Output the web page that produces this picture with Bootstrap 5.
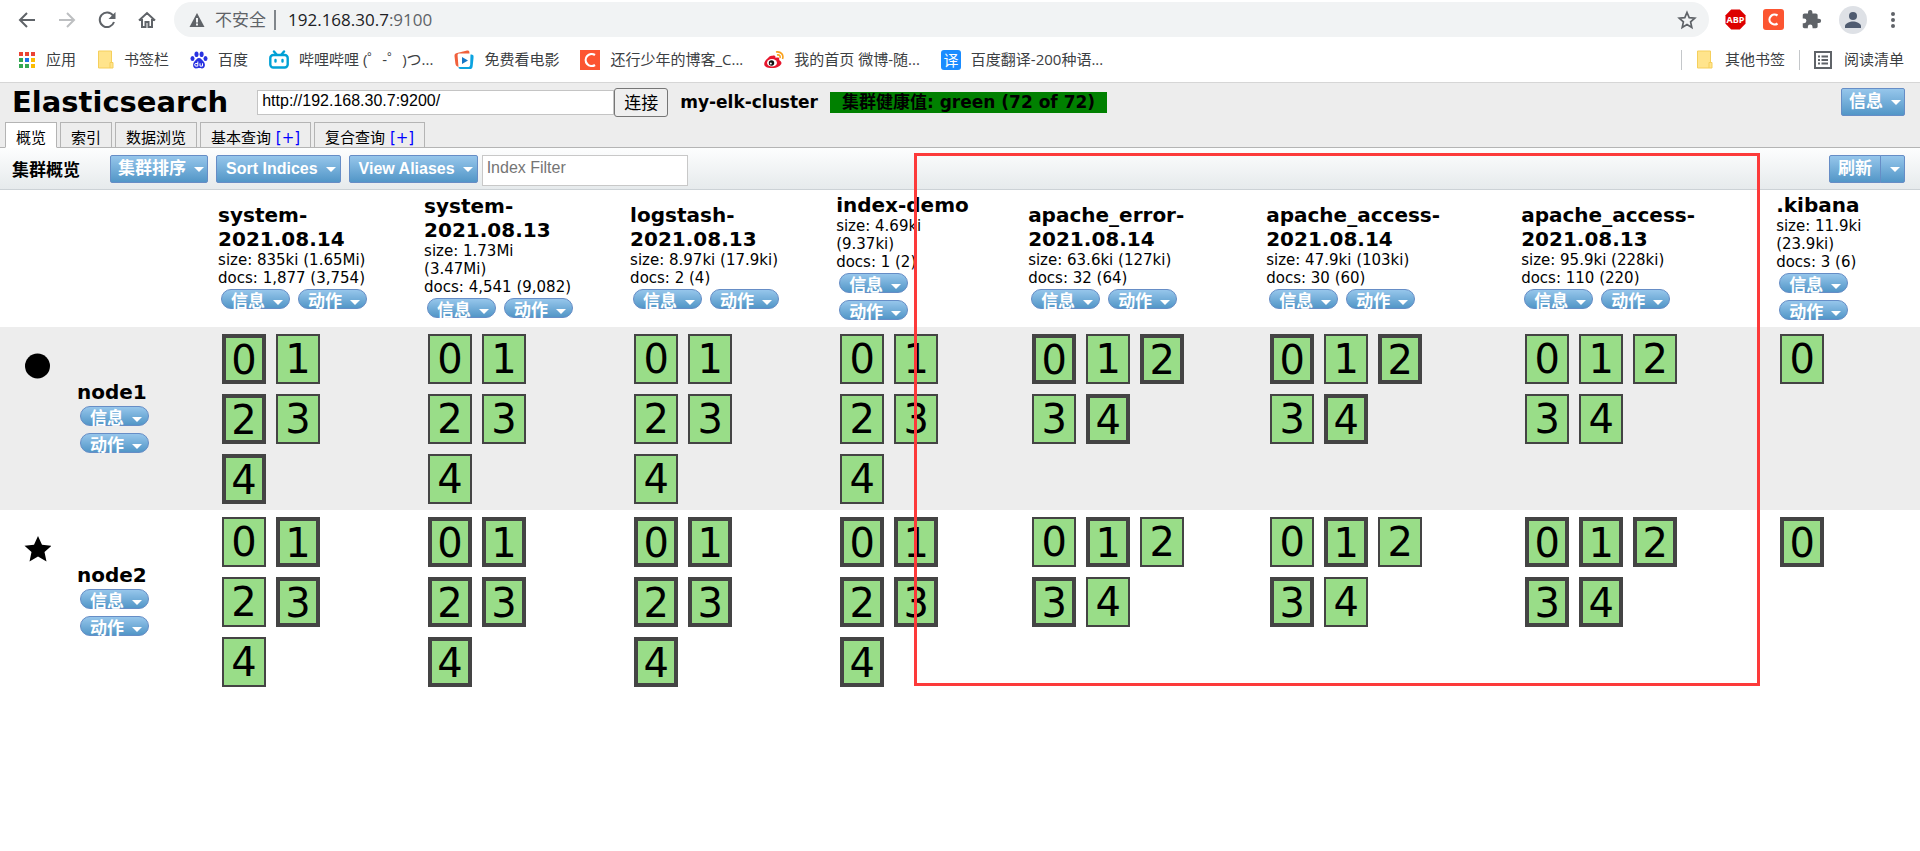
<!DOCTYPE html>
<html lang="zh-CN">
<head>
<meta charset="utf-8">
<meta name="viewport" content="width=device-width, initial-scale=1">
<title>elasticsearch-head</title>
<link href="https://cdn.jsdelivr.net/npm/bootstrap@5.3.0/dist/css/bootstrap.min.css" rel="stylesheet">
<style>
  body { font-family: "DejaVu Sans", "Noto Sans CJK SC", sans-serif; color: #000; background: #fff; }
  a { color: inherit; text-decoration: none; }
  svg { flex: none; display: block; }

  /* Browser bars */
  .chrome { font-family: "Open Sans", "Noto Sans CJK SC", sans-serif; color: #3c4043; border-bottom: 1px solid #d6d6d6; }
  .address-bar { padding: 2px 18px 0 18px; gap: 10px; }
  .tool { background: none; border: 0; padding: 0; }
  .nav-tools { gap: 22px; margin-right: 8px; }
  .omnibox { background: #f1f3f4; border-radius: 18px; height: 35px; padding: 0 12px 0 14px; font-size: 17px; color: #5f6368; }
  .omnibox .vline { width: 2px; height: 20px; background: #80868b; margin: 0 12px 0 8px; }
  .warn { margin-right: 9px; }
  .host { color: #202124; }
  .extensions { gap: 17px; margin-left: 6px; }
  .bookmarks { height: 45px; padding: 0 16px 0 18px; gap: 21px; font-size: 15px; }
  .bookmark { display: flex; align-items: center; gap: 10px; white-space: nowrap; }
  .side-marks { gap: 14px; }
  .side-marks .bookmark { gap: 12px; }
  .bookmark-line { width: 1px; height: 20px; background: #c4c7ca; }
  .bookmark-c { background: #fc5531; }

  /* Page header */
  .app-header { background: #ededed; border-bottom: 1px solid #b4b4b4; height: 65px; }
  .header-top { padding: 2px 15px 0 12px; }
  .app-name { font-size: 29px; line-height: 34px; font-weight: 700; margin: 0 29px 0 0; }
  .url-input { width: 357px; height: 25px; border: 1px solid #c4c4c4; padding: 0 4px 2px; font: 16px "Liberation Sans", sans-serif; }
  .connect { height: 29px; border: 1px solid #767676; border-radius: 3px; background: #efefef; padding: 0 9px; font: 17px/24px "Noto Sans CJK SC", sans-serif; color: #000; }
  .cluster { font-size: 17px; line-height: 21px; font-weight: 700; margin-left: 12px; }
  .health { background: #008000; padding: 0 12px; }
  .app-tabs { position: absolute; left: 5px; bottom: -1px; gap: 3px; font-size: 15px; line-height: 22px; }
  .app-tab { height: 26px; padding: 4px 10px 0; border: 1px solid #b4b4b4; white-space: nowrap; }
  .app-tab.active { background: #fff; border-bottom-color: #fff; }
  .plus { color: #00f; }

  /* Blue buttons */
  .btn-es { --bs-btn-color: #fff; --bs-btn-hover-color: #fff; display: inline-flex; align-items: center; height: 28px; padding: 0 4px 0 9px;
    border: 1px solid #668dc6; border-radius: 2px; background: linear-gradient(#96c6eb, #5296c7);
    font: 700 16px/24px "Liberation Sans", "Noto Sans CJK SC", sans-serif; color: #fff; }
  .btn-es::after { border-width: 5px 5px 0; margin-left: 8px; vertical-align: 0; }
  .btn-plain::after { display: none; }
  .btn-cjk { font-size: 17px; padding: 0 3px 0 7px; }
  .btn-pill { height: 20px; width: 69px; align-items: flex-start; border-radius: 10px; padding: 0 0 0 9px; font-size: 17px; line-height: 24px; }
  .btn-pill::after { margin-top: 10px; }

  .es-toolbar { height: 42px; padding: 7px 15px 0 12px; background: linear-gradient(#fdfefe, #e6eaec); border-bottom: 1px solid #ccd2d6; }
  .toolbar-title { font: 700 17px/27px "Noto Sans CJK SC", sans-serif; margin: 0 30px 0 0; }
  .filter { width: 206px; height: 31px; border: 1px solid #c8c8c8; padding: 0 4px 5px; font: 16px "Liberation Sans", sans-serif; margin-left: 4px; background: #fff; }
  .filter::placeholder { color: #757575; }

  /* Cluster grid */
  .cluster-grid { width: 100%; table-layout: fixed; border-collapse: collapse; }
  .c-node { width: 11.15%; } .c-two { width: 10.73%; } .c-demo { width: 10%; } .c-error { width: 12.4%; } .c-access { width: 13.28%; }
  .cluster-grid thead th { height: 137px; padding: 0 4px; vertical-align: middle; font-weight: 400; font-size: 15px; line-height: 18px; white-space: nowrap; }
  .index-name { font-size: 20px; line-height: 24px; font-weight: 700; margin: 0; white-space: nowrap; }
  .pills { display: flex; gap: 7px 8px; padding: 2px 0 5px 3px; }
  .pills.stacked { flex-direction: column; }
  .cluster-grid tbody tr { height: 183px; }
  .cluster-grid tbody tr:first-child { background: #ededed; }
  .cluster-grid tbody td, .cluster-grid tbody th { padding: 7px 8px 6px; vertical-align: top; }
  .node-cell { font-weight: 400; }
  .node-icon { margin: 18px 0 0 15px; }
  .node-label { margin-left: 69px; }
  .shards { display: grid; grid-template-columns: repeat(2, 44px); gap: 10px; }
  .shards.three { grid-template-columns: repeat(3, 44px); }
  .shards b { height: 50px; border: 2px solid #444; background: #9d8; font-size: 40px; line-height: 47px; font-weight: 400; text-align: center; }
  .shards b.pri { border-width: 4px; line-height: 44px; }

  /* Highlighted area over toolbar and grid */
  .marker { position: absolute; left: 47.6%; right: 8.35%; top: 5px; height: 533px; border: 3px solid #fc3a3a; pointer-events: none; }
</style>
</head>
<body>
<header class="chrome">
  <div class="address-bar d-flex align-items-center">
    <nav class="nav-tools d-flex align-items-center">
      <button class="tool" aria-label="后退"><svg width="18" height="18" viewBox="0 0 18 18" fill="none" stroke="#5f6368" stroke-width="2"><path d="M17 9H2.500M9 2 2 9l7 7"/></svg></button>
      <button class="tool" aria-label="前进"><svg width="18" height="18" viewBox="0 0 18 18" fill="none" stroke="#bdbfc1" stroke-width="2"><path d="M1 9h14.500M9 2l7 7-7 7"/></svg></button>
      <button class="tool" aria-label="刷新页面"><svg width="18" height="18" viewBox="0 0 18 18"><path d="M15 4.500A7.300 7.300 0 1 0 16 11" fill="none" stroke="#5f6368" stroke-width="2"/><path d="M17.500 1v7h-7z" fill="#5f6368"/></svg></button>
      <button class="tool" aria-label="主页"><svg width="18" height="18" viewBox="0 0 18 18" fill="none" stroke="#5f6368" stroke-width="2"><path d="M1 9.500 9 2l8 7.500M4 8v8h3.500v-5h3v5H14V8"/></svg></button>
    </nav>
    <div class="omnibox d-flex align-items-center flex-grow-1">
      <svg class="warn" width="18" height="16" viewBox="0 0 18 16"><path d="M9 1 16.500 15h-15z" fill="#5f6368"/><path d="M9 6v4.500M9 11.500v2" stroke="#f1f3f4" stroke-width="2"/></svg>
      <span>不安全</span><span class="vline"></span>
      <span class="flex-grow-1"><span class="host">192.168.30.7</span>:9100</span>
      <button class="tool" aria-label="收藏"><svg width="20" height="20" viewBox="0 0 20 20"><path d="m10 2.500 2.200 5.200 5.600.5-4.200 3.700 1.200 5.500L10 14.500l-4.800 2.900 1.200-5.500-4.200-3.700 5.600-.5z" fill="none" stroke="#5f6368" stroke-width="1.700"/></svg></button>
    </div>
    <div class="extensions d-flex align-items-center">
      <button class="tool" aria-label="Adblock Plus"><svg width="21" height="21" viewBox="0 0 21 21"><path d="M6.200.5h8.600l5.700 5.700v8.600l-5.700 5.700H6.200L.5 14.800V6.200z" fill="#d00"/><text x="10.500" y="14" font-family="Open Sans" font-size="9" font-weight="700" fill="#fff" text-anchor="middle">ABP</text></svg></button>
      <button class="tool" aria-label="C"><svg width="21" height="21" viewBox="0 0 21 21"><rect width="21" height="21" rx="3" fill="#fc5531"/><path d="M14.500 6.500a5 5 0 1 0 0 8" fill="none" stroke="#fff" stroke-width="2.200"/></svg></button>
      <button class="tool" aria-label="扩展程序"><svg width="21" height="21" viewBox="0 0 24 24"><path fill="#5f6368" d="M20.500 11H19V7c0-1.100-.9-2-2-2h-4V3.500a2.500 2.500 0 0 0-5 0V5H4c-1.100 0-2 .9-2 2v3.800h1.500a2.700 2.700 0 0 1 0 5.400H2V20c0 1.100.9 2 2 2h3.800v-1.500a2.700 2.700 0 0 1 5.400 0V22H17c1.100 0 2-.9 2-2v-4h1.500a2.500 2.500 0 0 0 0-5z"/></svg></button>
      <button class="tool" aria-label="用户"><svg width="28" height="28" viewBox="0 0 28 28"><circle cx="14" cy="14" r="14" fill="#dee1e6"/><circle cx="14" cy="10" r="4" fill="#4f5b70"/><path d="M6 22v-2c0-2.700 5-4.500 8-4.500s8 1.800 8 4.500v2z" fill="#4f5b70"/></svg></button>
      <button class="tool" aria-label="菜单"><svg width="18" height="18" viewBox="0 0 18 18" fill="#5f6368"><circle cx="9" cy="3" r="2"/><circle cx="9" cy="9" r="2"/><circle cx="9" cy="15" r="2"/></svg></button>
    </div>
  </div>
  <nav class="bookmarks d-flex align-items-center">
    <a href="#" class="bookmark"><svg width="18" height="18" viewBox="0 0 18 18"><path fill="#ea4335" d="M1 1h4v4H1zM7 1h4v4H7zM13 1h4v4h-4z"/><path fill="#34a853" d="M1 7h4v4H1zM1 13h4v4H1z"/><path fill="#1a73e8" d="M7 7h4v4H7z"/><path fill="#fbbc04" d="M13 7h4v4h-4zM13 13h4v4h-4z"/><path fill="#34a853" d="M7 13h4v4H7z"/></svg>应用</a>
    <a href="#" class="bookmark"><svg width="17" height="19" viewBox="0 0 17 19"><path d="M1.500 1h13v11.500h1.500V18H1.500z" fill="#ffe48c" stroke="#f5cf5c"/><path d="M13 18v-5.500h3" fill="none" stroke="#f5cf5c"/></svg>书签栏</a>
    <a href="#" class="bookmark"><svg width="18" height="18" viewBox="0 0 18 18" fill="#2932e1"><ellipse cx="6.500" cy="3.300" rx="2" ry="2.800"/><ellipse cx="11.600" cy="3.300" rx="2" ry="2.800"/><ellipse cx="2.500" cy="7.500" rx="2" ry="2.500"/><ellipse cx="15.500" cy="7.500" rx="2" ry="2.500"/><path d="M9 7c2 0 3 2 4.500 3.500 2.500 2.500 1.500 7-1.500 7-1.500 0-2-.4-3-.4s-1.500.4-3 .4c-3 0-4-4.500-1.500-7C6 9 7 7 9 7z"/><path d="M7.800 10.500v4.600H6a1 1 0 0 1 0-2.600h1.800M10 12.300v2.800h2.500v-2.800" fill="none" stroke="#fff"/></svg>百度</a>
    <a href="#" class="bookmark"><svg width="20" height="20" viewBox="0 0 20 20" fill="none" stroke="#00a1d6" stroke-width="2.400" stroke-linecap="round"><rect x="1.300" y="5" width="17.400" height="12.500" rx="3"/><path d="m5 1.500 2.500 3M15 1.500l-2.500 3M6.500 10v1.500M13.500 10v1.500"/></svg>哔哩哔哩 (゜-゜)つ...</a>
    <a href="#" class="bookmark"><svg width="20" height="20" viewBox="0 0 20 20"><path d="M.5 6C.5 4 1 3.500 3 3L13 .5c2-.5 2.500.5 2.500 3H5C3.500 3.500 3.500 5 3.700 7l.8 10C2 16 1.500 15 1.300 13z" fill="#f0603c"/><path d="M16.500 4.500c3 0 3.300 1 3 3.500l-.8 8c-.3 2.500-1 3-3.500 3H6.500c-1.500 0-2-1-2-2h9c2 0 2.500-.5 2.700-2.500z" fill="#0ba3e0"/><path d="m8 7 6 3.500L8 14z" fill="#1677c5"/></svg>免费看电影</a>
    <a href="#" class="bookmark"><svg class="bookmark-c" width="20" height="20" viewBox="0 0 20 20"><path d="M15 5a6 6 0 1 0 0 10" fill="none" stroke="#fff" stroke-width="2.200"/></svg>还行少年的博客_C...</a>
    <a href="#" class="bookmark"><svg width="20" height="20" viewBox="0 0 20 20"><path d="M8 6c2-1 4 0 3.500 2 3-1 4.500 0 3.500 2 6 3 0 8-7 8-9 0-10-5-4-10C5.500 6.500 7 5.500 8 6z" fill="#e6162d"/><ellipse cx="8" cy="12.800" rx="5" ry="3.700" fill="#fff"/><circle cx="7.500" cy="13" r="2.700" fill="#111"/><circle cx="6.800" cy="13.500" r="1" fill="#fff"/><path d="M12 2c5-1 8 3 6.500 7M13 5c2.500-.5 3.500 1 3 3" fill="none" stroke="#f9a11b" stroke-width="1.600"/></svg>我的首页 微博-随...</a>
    <a href="#" class="bookmark"><svg width="20" height="20" viewBox="0 0 20 20"><rect width="20" height="20" rx="3" fill="#1a8cff"/><text x="10" y="15.500" font-family="Noto Sans CJK SC" font-size="15" fill="#fff" text-anchor="middle">译</text></svg>百度翻译-200种语...</a>
    <div class="side-marks d-flex align-items-center ms-auto">
      <span class="bookmark-line"></span>
      <a href="#" class="bookmark"><svg width="17" height="19" viewBox="0 0 17 19"><path d="M1.500 1h13v11.500h1.500V18H1.500z" fill="#ffe48c" stroke="#f5cf5c"/><path d="M13 18v-5.500h3" fill="none" stroke="#f5cf5c"/></svg>其他书签</a>
      <span class="bookmark-line"></span>
      <a href="#" class="bookmark"><svg width="18" height="18" viewBox="0 0 18 18" fill="none" stroke="#5f6368" stroke-width="2"><path d="M1 1h16v16H1zM4 5.500h2M7.500 5.500H14M4 9h2M7.500 9H14M4 12.500h2M7.500 12.500H14"/></svg>阅读清单</a>
    </div>
  </nav>
</header>

<div class="app-header position-relative">
  <div class="header-top d-flex align-items-center">
    <h1 class="app-name">Elasticsearch</h1>
    <input class="url-input" type="text" value="http://192.168.30.7:9200/" aria-label="集群地址">
    <button class="connect" type="button">连接</button>
    <span class="cluster">my-elk-cluster</span>
    <span class="cluster health">集群健康值: green (72 of 72)</span>
    <button class="btn btn-es btn-cjk dropdown-toggle ms-auto" type="button">信息</button>
  </div>
  <nav class="app-tabs d-flex">
    <a href="#" class="app-tab active">概览</a>
    <a href="#" class="app-tab">索引</a>
    <a href="#" class="app-tab">数据浏览</a>
    <a href="#" class="app-tab">基本查询 <span class="plus">[+]</span></a>
    <a href="#" class="app-tab">复合查询 <span class="plus">[+]</span></a>
  </nav>
</div>

<main class="position-relative">
  <div class="es-toolbar d-flex align-items-start">
    <h2 class="toolbar-title">集群概览</h2>
    <div class="d-flex gap-2">
      <button class="btn btn-es btn-cjk dropdown-toggle" type="button">集群排序</button>
      <button class="btn btn-es dropdown-toggle" type="button">Sort Indices</button>
      <button class="btn btn-es dropdown-toggle" type="button">View Aliases</button>
    </div>
    <input class="filter" type="text" placeholder="Index Filter" aria-label="Index Filter">
    <div class="btn-group ms-auto">
      <button class="btn btn-es btn-cjk btn-plain px-2" type="button">刷新</button>
      <button class="btn btn-es dropdown-toggle" type="button" aria-label="刷新间隔"></button>
    </div>
  </div>

  <table class="cluster-grid">
    <colgroup><col class="c-node"><col class="c-two"><col class="c-two"><col class="c-two"><col class="c-demo"><col class="c-error"><col class="c-access"><col class="c-access"><col></colgroup>
    <thead>
      <tr>
        <th></th>
        <th><h3 class="index-name">system-<br>2021.08.14</h3>size: 835ki (1.65Mi)<br>docs: 1,877 (3,754)<div class="pills"><button class="btn btn-es btn-pill dropdown-toggle">信息</button><button class="btn btn-es btn-pill dropdown-toggle">动作</button></div></th>
        <th><h3 class="index-name">system-<br>2021.08.13</h3>size: 1.73Mi<br>(3.47Mi)<br>docs: 4,541 (9,082)<div class="pills"><button class="btn btn-es btn-pill dropdown-toggle">信息</button><button class="btn btn-es btn-pill dropdown-toggle">动作</button></div></th>
        <th><h3 class="index-name">logstash-<br>2021.08.13</h3>size: 8.97ki (17.9ki)<br>docs: 2 (4)<div class="pills"><button class="btn btn-es btn-pill dropdown-toggle">信息</button><button class="btn btn-es btn-pill dropdown-toggle">动作</button></div></th>
        <th><h3 class="index-name">index-demo</h3>size: 4.69ki<br>(9.37ki)<br>docs: 1 (2)<div class="pills stacked"><button class="btn btn-es btn-pill dropdown-toggle">信息</button><button class="btn btn-es btn-pill dropdown-toggle">动作</button></div></th>
        <th><h3 class="index-name">apache_error-<br>2021.08.14</h3>size: 63.6ki (127ki)<br>docs: 32 (64)<div class="pills"><button class="btn btn-es btn-pill dropdown-toggle">信息</button><button class="btn btn-es btn-pill dropdown-toggle">动作</button></div></th>
        <th><h3 class="index-name">apache_access-<br>2021.08.14</h3>size: 47.9ki (103ki)<br>docs: 30 (60)<div class="pills"><button class="btn btn-es btn-pill dropdown-toggle">信息</button><button class="btn btn-es btn-pill dropdown-toggle">动作</button></div></th>
        <th><h3 class="index-name">apache_access-<br>2021.08.13</h3>size: 95.9ki (228ki)<br>docs: 110 (220)<div class="pills"><button class="btn btn-es btn-pill dropdown-toggle">信息</button><button class="btn btn-es btn-pill dropdown-toggle">动作</button></div></th>
        <th><h3 class="index-name">.kibana</h3>size: 11.9ki<br>(23.9ki)<br>docs: 3 (6)<div class="pills stacked"><button class="btn btn-es btn-pill dropdown-toggle">信息</button><button class="btn btn-es btn-pill dropdown-toggle">动作</button></div></th>
      </tr>
    </thead>
    <tbody>
      <tr>
        <th class="node-cell">
          <svg class="node-icon" width="28" height="28" viewBox="0 0 28 28"><circle cx="14.500" cy="14" r="12.500"/></svg>
          <div class="node-label"><h3 class="index-name">node1</h3><div class="pills stacked"><button class="btn btn-es btn-pill dropdown-toggle">信息</button><button class="btn btn-es btn-pill dropdown-toggle">动作</button></div></div>
        </th>
        <td><div class="shards"><b class="pri">0</b><b>1</b><b class="pri">2</b><b>3</b><b class="pri">4</b></div></td>
        <td><div class="shards"><b>0</b><b>1</b><b>2</b><b>3</b><b>4</b></div></td>
        <td><div class="shards"><b>0</b><b>1</b><b>2</b><b>3</b><b>4</b></div></td>
        <td><div class="shards"><b>0</b><b>1</b><b>2</b><b>3</b><b>4</b></div></td>
        <td><div class="shards three"><b class="pri">0</b><b>1</b><b class="pri">2</b><b>3</b><b class="pri">4</b></div></td>
        <td><div class="shards three"><b class="pri">0</b><b>1</b><b class="pri">2</b><b>3</b><b class="pri">4</b></div></td>
        <td><div class="shards three"><b>0</b><b>1</b><b>2</b><b>3</b><b>4</b></div></td>
        <td><div class="shards"><b>0</b></div></td>
      </tr>
      <tr>
        <th class="node-cell">
          <svg class="node-icon" width="28" height="28" viewBox="0 0 28 28"><path d="m15 1 4 8.700 9.500 1-7 6.300 2 9.500L15 21.500 6.500 26.500l2-9.500-7-6.300 9.500-1z"/></svg>
          <div class="node-label"><h3 class="index-name">node2</h3><div class="pills stacked"><button class="btn btn-es btn-pill dropdown-toggle">信息</button><button class="btn btn-es btn-pill dropdown-toggle">动作</button></div></div>
        </th>
        <td><div class="shards"><b>0</b><b class="pri">1</b><b>2</b><b class="pri">3</b><b>4</b></div></td>
        <td><div class="shards"><b class="pri">0</b><b class="pri">1</b><b class="pri">2</b><b class="pri">3</b><b class="pri">4</b></div></td>
        <td><div class="shards"><b class="pri">0</b><b class="pri">1</b><b class="pri">2</b><b class="pri">3</b><b class="pri">4</b></div></td>
        <td><div class="shards"><b class="pri">0</b><b class="pri">1</b><b class="pri">2</b><b class="pri">3</b><b class="pri">4</b></div></td>
        <td><div class="shards three"><b>0</b><b class="pri">1</b><b>2</b><b class="pri">3</b><b>4</b></div></td>
        <td><div class="shards three"><b>0</b><b class="pri">1</b><b>2</b><b class="pri">3</b><b>4</b></div></td>
        <td><div class="shards three"><b class="pri">0</b><b class="pri">1</b><b class="pri">2</b><b class="pri">3</b><b class="pri">4</b></div></td>
        <td><div class="shards"><b class="pri">0</b></div></td>
      </tr>
    </tbody>
  </table>
  <div class="marker"></div>
</main>
<script src="https://cdn.jsdelivr.net/npm/bootstrap@5.3.0/dist/js/bootstrap.bundle.min.js"></script>
</body>
</html>
